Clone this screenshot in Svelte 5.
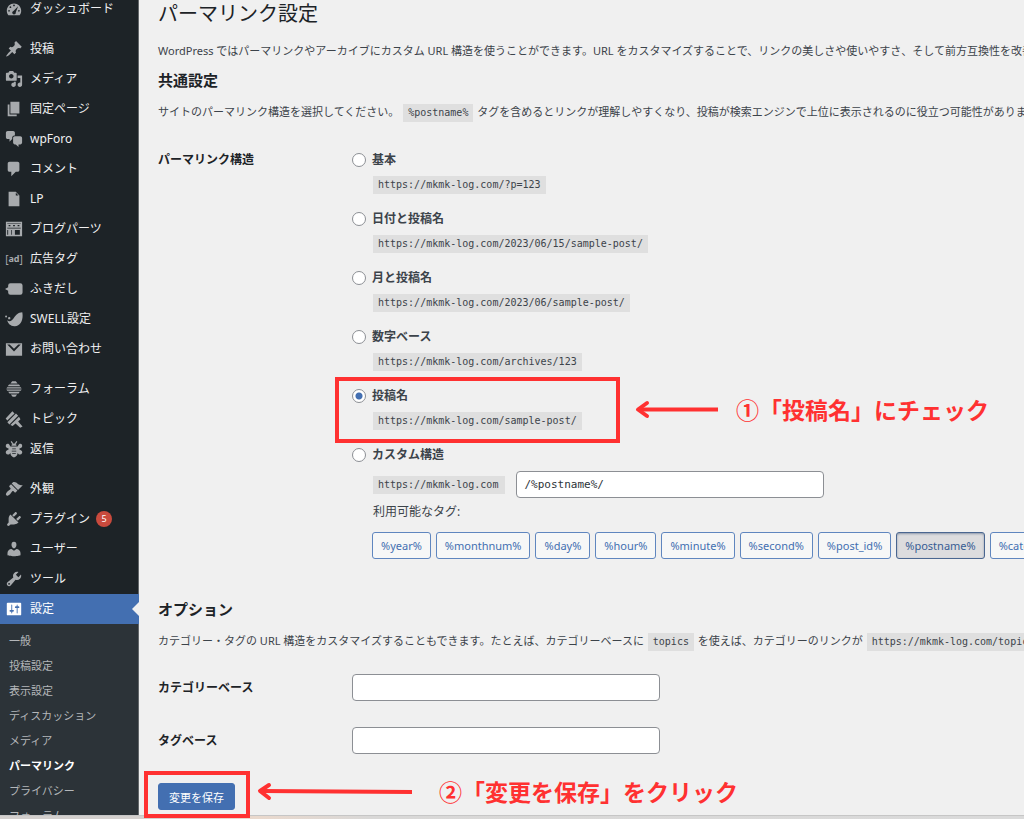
<script>
  const menuGroups = [
    [{ label: 'ダッシュボード', icon: 'dashboard' }],
    [
      { label: '投稿', icon: 'post' },
      { label: 'メディア', icon: 'media' },
      { label: '固定ページ', icon: 'page' },
      { label: 'wpForo', icon: 'chat' },
      { label: 'コメント', icon: 'comment' },
      { label: 'LP', icon: 'document' },
      { label: 'ブログパーツ', icon: 'parts' },
      { label: '広告タグ', icon: 'ad' },
      { label: 'ふきだし', icon: 'balloon' },
      { label: 'SWELL設定', icon: 'swell' },
      { label: 'お問い合わせ', icon: 'mail' },
    ],
    [
      { label: 'フォーラム', icon: 'hive' },
      { label: 'トピック', icon: 'topic' },
      { label: '返信', icon: 'bee' },
    ],
    [
      { label: '外観', icon: 'brush' },
      { label: 'プラグイン', icon: 'plugin', badge: 5 },
      { label: 'ユーザー', icon: 'user' },
      { label: 'ツール', icon: 'tool' },
      { label: '設定', icon: 'settings', current: true },
    ],
  ];

  const submenu = ['一般', '投稿設定', '表示設定', 'ディスカッション', 'メディア', 'パーマリンク', 'プライバシー', 'フォーラム'];

  const icons = {
    dashboard:
      'M3.76 17h12.48c1.1-1.37 1.76-3.11 1.76-5 0-4.42-3.58-8-8-8s-8 3.58-8 8c0 1.89.66 3.63 1.76 5zM10 5c.55 0 1 .45 1 1s-.45 1-1 1-1-.45-1-1 .45-1 1-1zM6 7c.55 0 1 .45 1 1s-.45 1-1 1-1-.45-1-1 .45-1 1-1zm8.600 0l-2.600 6.500c.2 1.500-.9 2.500-2 2.500s-2-.9-2-2c0-.9.600-1.600 1.400-1.900zM4.500 11c.55 0 1 .45 1 1s-.45 1-1 1-1-.45-1-1 .45-1 1-1zm11 0c.55 0 1 .45 1 1s-.45 1-1 1-1-.45-1-1 .45-1 1-1z',
    post: 'M10.44 3.02l1.82-1.82 6.36 6.35-1.83 1.82c-1.05-.68-2.48-.57-3.41.36l-.75.75c-.92.93-1.04 2.35-.35 3.41l-1.83 1.82-2.41-2.41-2.8 2.79c-.42.42-3.38 2.71-3.8 2.29s1.86-3.39 2.28-3.81l2.79-2.79L4.1 9.36l1.83-1.82c1.05.69 2.48.57 3.4-.36l.75-.75c.93-.92 1.05-2.35.36-3.41z',
    media:
      'M13 11V4c0-.55-.45-1-1-1h-1.67L9 1H5L3.67 3H2c-.55 0-1 .45-1 1v7c0 .55.45 1 1 1h10c.55 0 1-.45 1-1zM7 4.5c1.38 0 2.5 1.12 2.5 2.5S8.38 9.5 7 9.5 4.5 8.38 4.5 7 5.62 4.5 7 4.5zM14 6h5v10.5c0 1.38-1.12 2.5-2.5 2.5S14 17.88 14 16.5s1.12-2.5 2.5-2.5c.17 0 .34.02.5.05V9h-3V6zm-4 8.05V13h2v3.5c0 1.38-1.12 2.5-2.5 2.5S7 17.88 7 16.5 8.12 14 9.5 14c.17 0 .34.02.5.05z',
    page: 'M6 15V2h10v13H6zm-1 1h8v2H3V5h2v11z',
    chat: 'M11 6h-.82C9.07 6 8 7.2 8 8.16V10l-3 3v-3H3c-1.1 0-2-.9-2-2V3c0-1.1.9-2 2-2h6c1.1 0 2 .9 2 2v3zm0 1h6c1.1 0 2 .9 2 2v5c0 1.1-.9 2-2 2h-2v3l-3-3h-1c-1.1 0-2-.9-2-2V9c0-1.1.9-2 2-2z',
    comment: 'M5 2h9c1.1 0 2 .9 2 2v7c0 1.1-.9 2-2 2h-2l-5 5v-5H5c-1.1 0-2-.9-2-2V4c0-1.1.9-2 2-2z',
    document: 'M12 2l4 4v12H4V2h8zm0 4h3l-3-3v3z',
    parts:
      'M1 2h18v16H1zM2.500 3.500v.7h15v-.7zM2.500 8.500v1h15v-1zM2.500 11v5.500h1V11zm8.500 0v5.500h5.500V11zM7 11v5.500h.8V11zM4 5.500v1.500h2V5.500zm5 0v1.500h2V5.500zm5 0v1.500h2V5.500z',
    balloon: 'M6 3.500h11q2.500 0 2.500 2.500v8q0 2.500-2.500 2.500H6q-2.500 0-2.500-2.500v-2L0 10l3.500-2V6Q3.500 3.500 6 3.500z',
    swell:
      'M19.200 2.500c1.500 7.500-1.500 15-8.200 15.500-4.700.3-7.700-2.700-8.500-6.500 2.500 2 5.200 1 7.300-2.500 2.700-4.200 4.700-6 9.400-6.500zM1.200 6a1.100 1.100 0 1 1 0 2.200 1.100 1.100 0 0 1 0-2.200zM4.700 7.800a1.300 1.300 0 1 1 0 2.600 1.300 1.300 0 0 1 0-2.600z',
    mail: 'M1 3.500h18v14H1zM2.500 5l7.500 7.800L17.500 5h-2.700L10 9.800 5.200 5z',
    hive: 'M8 1.500h4L14 4H6zM4.500 5h11l1.500 2H3zM2.500 8h15l1 1.500H1.500zM1.500 10.500h17l-1 1.500H2.500zM3.500 13h13L15 15H5zM6.500 16h7l-2 2.500h-3z',
    topic:
      'M8.200 1.500l2.400 2.300-8 8-1.900-2.300zM12.200 4l2.400 2.400-9.700 9.700-2.300-2.500zM15.500 7.600l1.700 2.600-2.600 2.600 4.900 5.500-2.600 1.300-5.200-4.600-3.200 2.900-2.500-1.300z',
    bee: 'M10 4c1.700 0 2.800 1 2.800 2.500H7.200C7.200 5 8.300 4 10 4zM7.300 1l2 3-1.200.7L6.300 2zM12.700 1l1 1-1.800 2.700-1.200-.7zM6 7.300h8l1.500-2.600c2.500-1.500 4.500 1 3.300 3.300L15.500 10l3.300 2.200c1.200 2-.5 4.800-3.600 3.600L14 14.500c0 2.500-1.500 4-4 5-2.500-1-4-2.500-4-5l-1.200 1.300c-3.100 1.200-4.800-1.600-3.600-3.600L4.500 10 1.200 8C0 5.700 2 3.200 4.500 4.700zM8 9.500v.8h4v-.8zM7.500 12v.8h5V12zM8 14.800v.8h4v-.8z',
    brush:
      'M14.48 11.06L7.41 3.99l1.5-1.5c.5-.56 2.3-.47 3.51.32 1.21.8 1.43 1.28 2.91 2.1 1.18.64 2.45 1.26 4.45.85zm-.71.71L6.7 4.7 4.93 6.47c-.39.39-.39 1.02 0 1.41l1.06 1.06c.39.39.39 1.03 0 1.42-.6.6-1.43 1.11-2.21 1.69-.35.26-.7.53-1.01.84C1.43 14.23.4 16.08 1.4 17.07c.99 1 2.84-.03 4.18-1.36.31-.31.58-.66.85-1.02.57-.78 1.08-1.61 1.69-2.21.39-.39 1.02-.39 1.41 0l1.06 1.06c.39.39 1.02.39 1.41 0z',
    plugin:
      'M13.11 4.36L9.87 7.6 8 5.73l3.24-3.24c.35-.34 1.05-.2 1.56.32.52.51.66 1.21.31 1.55zm-8 1.77l.91-1.12 9.01 9.01-1.19.84c-.71.71-2.63 1.16-3.82 1.16H6.14L4.9 17.26c-.59.59-1.54.59-2.12 0-.59-.58-.59-1.53 0-2.12l1.24-1.24v-3.88c0-1.13.4-3.19 1.09-3.89zm7.26 3.97l3.24-3.24c.34-.35 1.04-.21 1.55.31.52.51.66 1.21.31 1.55l-3.24 3.25z',
    user: 'M10 9.25c-2.27 0-2.73-3.44-2.73-3.44C7 4.02 7.82 2 9.97 2c2.16 0 2.98 2.02 2.71 3.81 0 0-.41 3.44-2.68 3.44zm0 2.57L12.72 10c2.39 0 4.52 2.33 4.52 4.53v2.49s-3.65 1.13-7.24 1.13c-3.65 0-7.24-1.13-7.24-1.13v-2.49c0-2.25 1.94-4.48 4.47-4.48z',
    tool: 'M16.68 9.77c-1.34 1.34-3.3 1.67-4.95.99l-5.41 6.52c-.99.99-2.59.99-3.58 0s-.99-2.59 0-3.57l6.52-5.42c-.68-1.65-.35-3.61.99-4.95 1.28-1.28 3.12-1.62 4.72-1.06l-2.89 2.89 2.82 2.82 2.86-2.87c.53 1.58.18 3.39-1.08 4.65zM3.81 16.21c.4.39 1.04.39 1.43 0 .4-.4.4-1.04 0-1.43-.39-.4-1.03-.4-1.43 0-.39.39-.39 1.03 0 1.43z',
    settings:
      'M18 16V4c0-.55-.45-1-1-1H3c-.55 0-1 .45-1 1v12c0 .55.45 1 1 1h14c.55 0 1-.45 1-1zM8 11h1c.55 0 1 .45 1 1s-.45 1-1 1H8v1.5c0 .28-.22.5-.5.5s-.5-.22-.5-.5V13H6c-.55 0-1-.45-1-1s.45-1 1-1h1V5.5c0-.28.22-.5.5-.5s.5.22.5.5V11zm5-2h-1c-.55 0-1-.45-1-1s.45-1 1-1h1V5.5c0-.28.22-.5.5-.5s.5.22.5.5V7h1c.55 0 1 .45 1 1s-.45 1-1 1h-1v5.5c0 .28-.22.5-.5.5s-.5-.22-.5-.5V9z',
  };

  const structures = [
    { id: 'plain', label: '基本', url: 'https://mkmk-log.com/?p=123' },
    { id: 'day', label: '日付と投稿名', url: 'https://mkmk-log.com/2023/06/15/sample-post/' },
    { id: 'month', label: '月と投稿名', url: 'https://mkmk-log.com/2023/06/sample-post/' },
    { id: 'numeric', label: '数字ベース', url: 'https://mkmk-log.com/archives/123' },
    { id: 'postname', label: '投稿名', url: 'https://mkmk-log.com/sample-post/' },
  ];

  const tags = ['%year%', '%monthnum%', '%day%', '%hour%', '%minute%', '%second%', '%post_id%', '%postname%', '%category%'];

  let selected = $state('postname');
  let customStructure = $state('/%postname%/');
  let categoryBase = $state('');
  let tagBase = $state('');

  function toggleTag(tag) {
    selected = 'custom';
    customStructure = customStructure.includes(tag)
      ? customStructure.replace(`/${tag}`, '')
      : `${customStructure}${tag}/`;
  }
</script>

<div class="screen">
  <div class="admin">
    <nav class="sidebar" aria-label="メインメニュー">
      {#each menuGroups as group}
        <ul class="menu">
          {#each group as item}
            <li>
              <a href="#{item.icon}" class:current={item.current}>
                {#if item.icon === 'ad'}
                  <span class="icon ad" aria-hidden="true">[<b>ad</b>]</span>
                {:else}
                  <svg class="icon" viewBox="0 0 20 20" aria-hidden="true">
                    <path fill-rule="evenodd" d={icons[item.icon]} />
                  </svg>
                {/if}
                <span>{item.label}</span>
                {#if item.badge}<span class="badge">{item.badge}</span>{/if}
              </a>
            </li>
          {/each}
        </ul>
      {/each}
      <ul class="submenu">
        {#each submenu as item}
          <li><a href="#sub" class:active={item === 'パーマリンク'}>{item}</a></li>
        {/each}
      </ul>
    </nav>

    <main>
      <h1>パーマリンク設定</h1>
      <p>WordPress ではパーマリンクやアーカイブにカスタム URL 構造を使うことができます。URL をカスタマイズすることで、リンクの美しさや使いやすさ、そして前方互換性を改善できます。</p>
      <h2>共通設定</h2>
      <p>サイトのパーマリンク構造を選択してください。 <code>%postname%</code> タグを含めるとリンクが理解しやすくなり、投稿が検索エンジンで上位に表示されるのに役立つ可能性があります。</p>

      <form onsubmit={(e) => e.preventDefault()}>
        <div class="row structure" role="radiogroup" aria-labelledby="structure-title">
          <div class="title" id="structure-title">パーマリンク構造</div>
          <div class="options">
            {#each structures as s}
              <div class="option">
                <label class="choice">
                  <input type="radio" name="structure" value={s.id} bind:group={selected} />
                  {s.label}
                </label>
                <div class="example"><code>{s.url}</code></div>
                {#if s.id === 'postname'}
                  <div class="frame frame-option"></div>
                  <div class="note note-option">
                    <svg width="84" height="20" viewBox="0 0 84 20" aria-hidden="true">
                      <path d="M83 10.500H4" />
                      <path class="head" d="M12 4L3 10.500L12 17" />
                    </svg>
                    <span>①「投稿名」にチェック</span>
                  </div>
                {/if}
              </div>
            {/each}
            <label class="choice">
              <input type="radio" name="structure" value="custom" bind:group={selected} />
              カスタム構造
            </label>
            <div class="custom">
              <code>https://mkmk-log.com</code>
              <input class="text mono" type="text" aria-label="カスタム構造" bind:value={customStructure} />
            </div>
            <div class="available">利用可能なタグ:</div>
            <div class="tags">
              {#each tags as tag}
                <button type="button" class="tag" class:pressed={customStructure.includes(tag)} onclick={() => toggleTag(tag)}>{tag}</button>
              {/each}
            </div>
          </div>
        </div>

        <h2 class="optional">オプション</h2>
        <p>カテゴリー・タグの URL 構造をカスタマイズすることもできます。たとえば、カテゴリーベースに <code>topics</code> を使えば、カテゴリーのリンクが <code>https://mkmk-log.com/topics/uncategorized/</code> のようになります。</p>

        <div class="row base">
          <label class="title" for="category-base">カテゴリーベース</label>
          <input class="text" id="category-base" type="text" bind:value={categoryBase} />
        </div>
        <div class="row base">
          <label class="title" for="tag-base">タグベース</label>
          <input class="text" id="tag-base" type="text" bind:value={tagBase} />
        </div>

        <div class="submit">
          <button type="submit" class="save">変更を保存</button>
          <div class="frame frame-save"></div>
          <div class="note note-save">
            <svg width="156" height="20" viewBox="0 0 156 20" aria-hidden="true">
              <path d="M155 11L4 10" />
              <path class="head" d="M12 4L3 10L12 17" />
            </svg>
            <span>②「変更を保存」をクリック</span>
          </div>
        </div>
      </form>
    </main>
  </div>
  <div class="desktop-edge"></div>
</div>

<style>
  :global(body) {
    margin: 0;
  }

  .screen {
    display: flex;
    flex-direction: column;
    height: 100vh;
    overflow: hidden;
    background: #f0f0f0;
    color: #3c434a;
    font: 11px/20px 'Noto Sans', 'Noto Sans CJK JP', sans-serif;
  }

  .admin {
    flex: 1;
    min-height: 0;
    display: flex;
  }

  .desktop-edge {
    flex: none;
    height: 3px;
    border-top: 1px solid #c6c6c6;
    background: linear-gradient(90deg, #d4d0ce 0, #d4d0ce 14%, #ead9cd 25%, #d9d8d7 36%, #dadada 100%);
  }

  /* Sidebar */
  .sidebar {
    flex: none;
    box-sizing: border-box;
    width: 139px;
    margin-top: -6px;
    overflow-y: clip;
    background: #1d2327;
    border-right: 1px solid #63676a;
  }

  ul {
    margin: 0;
    padding: 0;
    list-style: none;
  }

  .menu + .menu {
    margin-top: 10px;
  }

  .menu a {
    position: relative;
    display: flex;
    align-items: center;
    gap: 7px;
    height: 30px;
    padding-left: 5px;
    color: #f0f0f1;
    font-size: 12px;
    text-decoration: none;
    white-space: nowrap;
  }

  .icon {
    flex: none;
    width: 18px;
    height: 18px;
    fill: #a7aaad;
  }

  .ad {
    display: flex;
    align-items: center;
    justify-content: center;
    color: #a7aaad;
    font-size: 10px;
    line-height: 18px;
  }

  .ad b {
    font-size: 9px;
  }

  .menu a.current {
    margin-right: -1px;
    background: #436fb1;
    color: #fff;
  }

  .current .icon {
    fill: #fff;
  }

  .current::after {
    content: '';
    position: absolute;
    right: 0;
    top: 8px;
    border: 7px solid transparent;
    border-left: 0;
    border-right-color: #f0f0f0;
  }

  .badge {
    flex: none;
    width: 16px;
    height: 16px;
    margin-left: -1px;
    border-radius: 50%;
    background: #c94a3d;
    color: #fff;
    font-size: 9px;
    line-height: 16px;
    text-align: center;
  }

  .submenu {
    padding: 4px 0 12px;
    background: #2c3338;
  }

  .submenu a {
    display: block;
    padding-left: 9px;
    color: #b4b7ba;
    line-height: 25px;
    text-decoration: none;
  }

  .submenu a.active {
    color: #fff;
    font-weight: 700;
  }

  /* Content */
  main {
    flex: 1;
    min-width: 0;
    padding: 1px 0 0 19px;
    overflow-x: clip;
    white-space: nowrap;
  }

  h1 {
    margin: 0 0 14px;
    color: #1d2327;
    font-size: 20px;
    font-weight: 400;
    line-height: 26px;
  }

  h2 {
    margin: 9px 0 12px;
    color: #1d2327;
    font-size: 15px;
    font-weight: 700;
    line-height: 20px;
  }

  h2.optional {
    margin-top: 40px;
  }

  p {
    margin: 0;
  }

  code {
    display: inline-block;
    margin: 0 1px;
    padding: 0 5px;
    background: #dfdfdf;
    font: 10px/18px 'DejaVu Sans Mono', monospace;
  }

  .row {
    display: grid;
    grid-template-columns: 194px 1fr;
  }

  .title {
    color: #1d2327;
    font-size: 12px;
    font-weight: 700;
  }

  .structure {
    margin-top: 28px;
  }

  .option {
    position: relative;
    padding-bottom: 16px;
  }

  .choice {
    display: flex;
    align-items: center;
    gap: 6px;
    width: max-content;
    height: 20px;
    font-size: 12px;
    font-weight: 600;
  }

  input[type='radio'] {
    appearance: none;
    flex: none;
    box-sizing: border-box;
    width: 14px;
    height: 14px;
    margin: 0;
    border: 1px solid #8c8f94;
    border-radius: 50%;
    background: #fff;
  }

  input[type='radio']:checked {
    background: radial-gradient(circle, #436fb1 3px, #fff 4px);
  }

  .example {
    height: 18px;
    padding: 5px 0 0 20px;
    line-height: 18px;
  }

  .custom {
    display: flex;
    align-items: center;
    gap: 10px;
    margin-top: 6px;
    padding-left: 20px;
  }

  .custom code {
    padding: 0 7px 0 5px;
  }

  .text {
    box-sizing: border-box;
    width: 308px;
    height: 27px;
    padding: 0 7px;
    border: 1px solid #8c8f94;
    border-radius: 4px;
    background: #fff;
    color: #2c3338;
    font: 11px 'Noto Sans', 'Noto Sans CJK JP', sans-serif;
  }

  .mono {
    font: 11px 'DejaVu Sans Mono', monospace;
  }

  .available {
    margin: 4px 0 10px;
    padding-left: 21px;
    font-size: 12px;
  }

  .tags {
    display: flex;
    gap: 5px;
    padding-left: 20px;
  }

  .tag {
    flex: none;
    height: 27px;
    padding: 0 8px;
    border: 1px solid #5f86bf;
    border-radius: 3px;
    background: #f6f7f7;
    color: #436fb1;
    font: 11px 'Noto Sans', sans-serif;
  }

  .tag.pressed {
    border-color: #4a6690;
    background: #dcdcde;
    box-shadow: inset 0 1px 3px -1px #3c5478;
    color: #385d94;
  }

  .base {
    margin-top: 26px;
    align-items: center;
  }

  p + .base {
    margin-top: 23px;
  }

  .submit {
    position: relative;
    margin-top: 29px;
  }

  .save {
    height: 27px;
    padding: 0 10px;
    border: 1px solid #436fb1;
    border-radius: 3px;
    background: #436fb1;
    color: #fff;
    font: 11px 'Noto Sans', 'Noto Sans CJK JP', sans-serif;
  }

  /* Red call-outs laid over the form */
  .frame {
    position: absolute;
    box-sizing: border-box;
    border: 4px solid #ff3131;
    pointer-events: none;
  }

  .frame-option {
    left: -17px;
    top: -9px;
    width: 285px;
    height: 66px;
  }

  .frame-save {
    left: -14px;
    top: -12px;
    width: 106px;
    height: 47px;
  }

  .note {
    position: absolute;
    display: flex;
    align-items: center;
    color: #ff3131;
    font: 700 23px/30px 'Noto Sans CJK JP', sans-serif;
    pointer-events: none;
  }

  .note path {
    fill: none;
    stroke: #ff3131;
    stroke-width: 4;
    stroke-linejoin: round;
  }

  .note .head {
    stroke-linecap: round;
  }

  .note-option {
    left: 283px;
    top: 8px;
    gap: 17px;
  }

  .note-save {
    left: 99px;
    top: -7px;
    gap: 26px;
  }
</style>
